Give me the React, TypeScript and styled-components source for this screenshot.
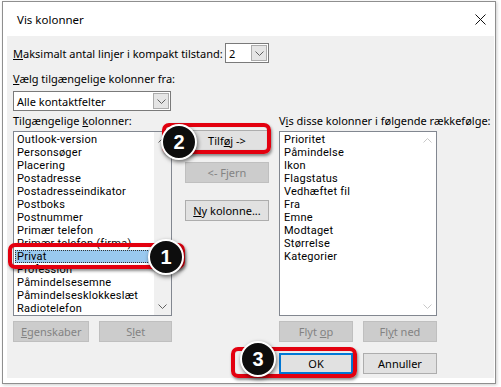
import React from 'react'
import styled, { createGlobalStyle } from 'styled-components'

const GlobalStyle = createGlobalStyle`
  html, body {
    margin: 0;
    padding: 0;
    background: #fff;
  }
  body {
    font-family: 'Noto Sans', 'Segoe UI', sans-serif;
    font-size: 11px;
    color: #000;
  }
`

const Page = styled.div`
  position: relative;
  width: 501px;
  height: 387px;
  padding: 1px 0 0 2px;
  box-sizing: border-box;
  overflow: hidden;
`

const Window = styled.div`
  width: 494px;
  height: 383px;
  box-sizing: border-box;
  border: 1px solid #8f8f8f;
  background: #fff;
  display: flex;
  flex-direction: column;
  padding: 0 1px 5px 4px;
  box-shadow: 1px 1px 3px rgba(0, 0, 0, 0.2);
`

const TitleBar = styled.div`
  height: 34px;
  display: flex;
  align-items: center;
  justify-content: space-between;
  padding: 0 8px 0 10px;
  flex-shrink: 0;
`

const Title = styled.span`
  font-size: 11.5px;
`

const Body = styled.div`
  flex: 1;
  background: #f0f0f0;
  padding: 7px 0 0 6px;
  display: flex;
  flex-direction: column;
`

const Row = styled.div`
  display: flex;
  align-items: center;
  height: 20px;
`

const Label = styled.div<{ $top?: number; $width?: number }>`
  line-height: 15px;
  margin-top: ${({ $top }) => $top ?? 0}px;
  width: ${({ $width }) => ($width ? `${$width}px` : 'auto')};
  white-space: nowrap;
`

const Combo = styled.div<{ $width: number; $top?: number }>`
  width: ${({ $width }) => $width}px;
  height: 20px;
  box-sizing: border-box;
  border: 1px solid #7a7a7a;
  background: #fff;
  display: flex;
  align-items: center;
  padding: 0 1px 0 3px;
  margin-top: ${({ $top }) => $top ?? 0}px;
  flex-shrink: 0;
`

const ComboText = styled.span`
  flex: 1;
`

const ComboButton = styled.div`
  width: 16px;
  height: 16px;
  box-sizing: border-box;
  border: 1px solid #acacac;
  background: #e5e5e5;
  display: flex;
  align-items: center;
  justify-content: center;
`

const Columns = styled.div`
  display: grid;
  grid-template-columns: 159px 107px 158px;
  grid-template-rows: 15px 188px 26px 32px;
  margin-top: 2px;
`

const ListBox = styled.div`
  box-sizing: border-box;
  border: 1px solid #828790;
  background: #fff;
  display: flex;
  margin-top: 3px;
  height: 185px;
`

const Items = styled.div<{ $indent: number }>`
  flex: 1;
  padding: 1px 0 0 ${({ $indent }) => $indent}px;
  overflow: hidden;
`

const Item = styled.div<{ $selected?: boolean }>`
  height: 13px;
  line-height: 13px;
  padding-left: 2px;
  box-sizing: border-box;
  white-space: nowrap;
  font-family: Roboto, 'Noto Sans', sans-serif;
  font-size: 11px;
  letter-spacing: 0.25px;
  background: ${({ $selected }) => ($selected ? '#99c9ef' : 'transparent')};
  outline: ${({ $selected }) => ($selected ? '1px dotted #333' : 'none')};
  outline-offset: -1px;
`

const ScrollBar = styled.div<{ $track: string }>`
  width: 17px;
  background: ${({ $track }) => $track};
  display: flex;
  flex-direction: column;
  justify-content: space-between;
  align-items: center;
  padding: 6px 0;
  box-sizing: border-box;
`

const MiddleStack = styled.div`
  grid-row: 2;
  grid-column: 2;
  display: flex;
  flex-direction: column;
  padding: 2px 10px 0 13px;
`

const Button = styled.div<{ $disabled?: boolean; $default?: boolean; $width?: number; $top?: number }>`
  width: ${({ $width }) => $width ?? 74}px;
  height: 21px;
  box-sizing: border-box;
  display: flex;
  align-items: center;
  justify-content: center;
  white-space: pre;
  margin-top: ${({ $top }) => $top ?? 0}px;
  background: ${({ $disabled }) => ($disabled ? '#cccccc' : '#e1e1e1')};
  color: ${({ $disabled }) => ($disabled ? '#838383' : '#000')};
  border: ${({ $disabled, $default }) =>
    $default ? '2px solid #0078d7' : $disabled ? '1px solid #bfbfbf' : '1px solid #adadad'};
`

const ButtonPair = styled.div<{ $top: number; $gap?: number }>`
  display: flex;
  gap: ${({ $gap }) => $gap ?? 10}px;
  margin-top: ${({ $top }) => $top}px;
`

const RedFrame = styled.div<{ $x: number; $y: number; $w: number; $h: number }>`
  position: absolute;
  left: ${({ $x }) => $x}px;
  top: ${({ $y }) => $y}px;
  width: ${({ $w }) => $w}px;
  height: ${({ $h }) => $h}px;
  box-sizing: border-box;
  border: 4px solid #e3000f;
  border-radius: 7px;
  box-shadow: 1px 2px 3px rgba(0, 0, 0, 0.45), inset 0 0 1px rgba(0, 0, 0, 0.3);
`

const Badge = styled.div<{ $x: number; $y: number }>`
  position: absolute;
  left: ${({ $x }) => $x - 18}px;
  top: ${({ $y }) => $y - 18}px;
  width: 36px;
  height: 36px;
  box-sizing: border-box;
  border-radius: 50%;
  background: #0d0d0d;
  border: 2.5px solid #fff;
  box-shadow: 1px 2px 4px rgba(0, 0, 0, 0.55);
  color: #fff;
  font-family: 'Liberation Sans', Arial, sans-serif;
  font-weight: bold;
  font-size: 20px;
  display: flex;
  align-items: center;
  justify-content: center;
`

const Chevron = ({ up, color = '#606060' }: { up?: boolean; color?: string }) => (
  <svg width="9" height="5" viewBox="0 0 9 5">
    <path d={up ? 'M0.5 4.5 L4.5 0.5 L8.5 4.5' : 'M0.5 0.5 L4.5 4.5 L8.5 0.5'} fill="none" stroke={color} strokeWidth="1" />
  </svg>
)

const available = [
  'Outlook-version',
  'Personsøger',
  'Placering',
  'Postadresse',
  'Postadresseindikator',
  'Postboks',
  'Postnummer',
  'Primær telefon',
  'Primær telefon (firma)',
  'Privat',
  'Profession',
  'Påmindelsesemne',
  'Påmindelsesklokkeslæt',
  'Radiotelefon',
]

const shown = [
  'Prioritet',
  'Påmindelse',
  'Ikon',
  'Flagstatus',
  'Vedhæftet fil',
  'Fra',
  'Emne',
  'Modtaget',
  'Størrelse',
  'Kategorier',
]

export default function App() {
  return (
    <Page>
      <GlobalStyle />
      <Window>
        <TitleBar>
          <Title>Vis kolonner</Title>
          <svg width="11" height="11" viewBox="0 0 11 11">
            <path d="M0.5 0.5 L10.5 10.5 M10.5 0.5 L0.5 10.5" stroke="#111" strokeWidth="1" />
          </svg>
        </TitleBar>
        <Body>
          <Row>
            <Label $width={212}><u>M</u>aksimalt antal linjer i kompakt tilstand:</Label>
            <Combo $width={44}>
              <ComboText>2</ComboText>
              <ComboButton><Chevron /></ComboButton>
            </Combo>
          </Row>
          <Label $top={8}><u>V</u>ælg tilgængelige kolonner fra:</Label>
          <Combo $width={158} $top={5}>
            <ComboText>Alle kontaktfelter</ComboText>
            <ComboButton><Chevron /></ComboButton>
          </Combo>
          <Columns>
            <Label>Tilgængelige <u>k</u>olonner:</Label>
            <div />
            <Label>V<u>i</u>s disse kolonner i følgende rækkefølge:</Label>

            <ListBox>
              <Items $indent={1}>
                {available.map((name) => (
                  <Item key={name} $selected={name === 'Privat'}>{name}</Item>
                ))}
              </Items>
              <ScrollBar $track="#f0f0f0">
                <Chevron up />
                <Chevron />
              </ScrollBar>
            </ListBox>
            <MiddleStack>
              <Button $width={84} $top={0}><span>Tilf<u>ø</u>j -&gt;</span></Button>
              <Button $width={84} $top={11} $disabled><span>&lt;- F<u>j</u>ern</span></Button>
              <Button $width={84} $top={17}><span><u>N</u>y kolonne...</span></Button>
            </MiddleStack>
            <ListBox>
              <Items $indent={2}>
                {shown.map((name) => (
                  <Item key={name}>{name}</Item>
                ))}
              </Items>
              <ScrollBar $track="#fff">
                <Chevron up color="#c8c8c8" />
                <Chevron color="#c8c8c8" />
              </ScrollBar>
            </ListBox>

            <ButtonPair $top={5} $gap={10}>
              <Button $disabled $width={77}><span><u>E</u>genskaber</span></Button>
              <Button $disabled $width={73}><span>S<u>l</u>et</span></Button>
            </ButtonPair>
            <div />
            <ButtonPair $top={5}>
              <Button $disabled><span>Flyt <u>o</u>p</span></Button>
              <Button $disabled><span>Fl<u>y</u>t ned</span></Button>
            </ButtonPair>

            <div />
            <div />
            <ButtonPair $top={11}>
              <Button $default><span>OK</span></Button>
              <Button><span>Annuller</span></Button>
            </ButtonPair>
          </Columns>
        </Body>
      </Window>

      <RedFrame $x={162} $y={123} $w={109} $h={31} />
      <RedFrame $x={8} $y={243} $w={177} $h={26} />
      <RedFrame $x={231} $y={347} $w={126} $h={31} />
      <Badge $x={179} $y={142}>2</Badge>
      <Badge $x={166} $y={257}>1</Badge>
      <Badge $x={258} $y={359}>3</Badge>
    </Page>
  )
}
